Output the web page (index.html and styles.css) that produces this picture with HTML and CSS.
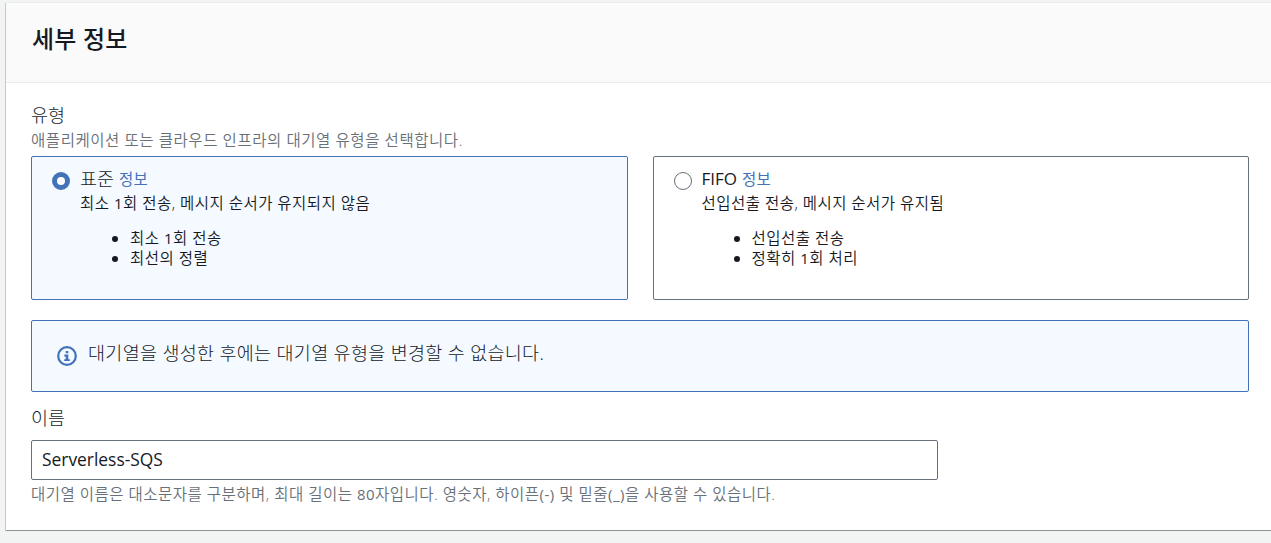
FILE: index.html
```html
<!DOCTYPE html>
<html lang="ko">
<head>
    <meta charset="UTF-8">
    <meta name="viewport" content="width=device-width, initial-scale=1.0">
    <title>세부 정보</title>
    <link rel="stylesheet" href="styles.css">
</head>
<body>
    <div class="panel">
        <div class="panel-header">
            <h2>세부 정보</h2>
        </div>
        <div class="panel-body">
            <div class="label">유형</div>
            <div class="hint type-hint">애플리케이션 또는 클라우드 인프라의 대기열 유형을 선택합니다.</div>

            <div class="tiles">
                <div class="tile selected">
                    <span class="radio"></span>
                    <div class="tile-content">
                        <div class="tile-title"><span class="name">표준</span> <a class="info">정보</a></div>
                        <div class="tile-desc">최소 <span class="num">1</span>회 전송, 메시지 순서가 유지되지 않음</div>
                        <ul>
                            <li>최소 <span class="num">1</span>회 전송</li>
                            <li>최선의 정렬</li>
                        </ul>
                    </div>
                </div>
                <div class="tile">
                    <span class="radio"></span>
                    <div class="tile-content">
                        <div class="tile-title"><span class="name latin">FIFO</span> <a class="info">정보</a></div>
                        <div class="tile-desc">선입선출 전송, 메시지 순서가 유지됨</div>
                        <ul>
                            <li>선입선출 전송</li>
                            <li>정확히 <span class="num">1</span>회 처리</li>
                        </ul>
                    </div>
                </div>
            </div>

            <div class="alert">
                <svg class="alert-icon" width="20" height="20" viewBox="0 0 20 20">
                    <circle cx="10" cy="10" r="8.8" fill="none" stroke="#4272b8" stroke-width="2.2"/>
                    <path d="M8.7 5h2.6v2.2H8.7zM7.3 8.6h4v4.6h1.5V15H7.2v-1.8h1.5v-2.8H7.3z" fill="#4272b8"/>
                </svg>
                <span class="alert-text">대기열을 생성한 후에는 대기열 유형을 변경할 수 없습니다.</span>
            </div>

            <div class="label">이름</div>
            <input class="input" type="text" value="Serverless-SQS">
            <div class="hint name-hint">대기열 이름은 대소문자를 구분하며, 최대 길이는 <span class="num">80</span>자입니다. 영숫자, 하이픈<span class="num">(-)</span> 및 밑줄<span class="num">(_)</span>을 사용할 수 있습니다.</div>
        </div>
    </div>
</body>
</html>
```
FILE: styles.css
```css
* {
    margin: 0;
    padding: 0;
    box-sizing: border-box;
}

body {
    background: #f2f3f3;
    padding: 3px 0 0 6px;
    font-family: "Open Sans", "Noto Sans CJK KR", sans-serif;
    font-weight: 350;
    font-size: 15.5px;
    color: #16191f;
    overflow: hidden;
    white-space: nowrap;
}

.panel {
    height: 528px;
    background: #fff;
    border-bottom: 1px solid #879596;
    box-shadow: 0 1px 0 #d5dbdb, -1px 0 0 #c4c9ca, 0 -1px 0 #eaeded;
}

.panel-header {
    height: 80px;
    padding: 18px 25px 0 26px;
    background: #fafafa;
    border-bottom: 1px solid #eaeded;
}

h2 {
    font-size: 24px;
    line-height: 36px;
    font-weight: 500;
    letter-spacing: 0.2px;
}

.panel-body {
    padding: 20px 22px 0 25px;
}

.label {
    font-size: 18.5px;
    font-weight: 300;
    line-height: 24px;
}

.hint {
    color: #687078;
    line-height: 24px;
}

.num {
    font-size: 15px;
    font-weight: 400;
}

.type-hint {
    padding-top: 1px;
    margin-bottom: 4px;
    letter-spacing: 0.56px;
}

.name-hint {
    letter-spacing: 0.49px;
}

.tiles {
    display: flex;
    gap: 25px;
    margin-bottom: 20px;
}

.tile {
    flex: 1;
    display: flex;
    height: 144px;
    padding: 10px 20px;
    border: 1px solid #687078;
    border-radius: 2px;
}

.tile.selected {
    border-color: #4272b8;
    background: #f4faff;
}

.radio {
    width: 18px;
    height: 18px;
    margin: 5px 10px 0 0;
    border: 1px solid #687078;
    border-radius: 50%;
    background: #fff;
}

.selected .radio {
    border: 5.5px solid #4272b8;
}

.tile-title {
    font-size: 18.5px;
    font-weight: 300;
    line-height: 24px;
    height: 24px;
    display: flex;
    gap: 5px;
}

.latin {
    font-size: 17px;
    font-weight: 400;
}

.info {
    font-size: 15.5px;
    font-weight: 400;
    color: #4272b8;
    letter-spacing: 0.3px;
}

.tile-desc {
    line-height: 20px;
    margin-top: 2px;
    letter-spacing: 0.47px;
}

ul {
    margin-top: 15px;
    padding-left: 50px;
    letter-spacing: 0.47px;
}

li {
    line-height: 20px;
}

.alert {
    display: flex;
    height: 72px;
    margin-bottom: 14px;
    padding: 25px;
    border: 1px solid #4272b8;
    border-radius: 2px;
    background: #f4faff;
}

.alert-icon {
    margin-right: 11px;
}

.alert-text {
    font-size: 18.5px;
    font-weight: 300;
    line-height: 20px;
    margin-top: -3px;
    letter-spacing: 0.3px;
}

.input {
    display: block;
    width: 907px;
    height: 40px;
    margin: 10px 0 2px;
    padding: 0 10px 2px;
    border: 1px solid #687078;
    border-radius: 2px;
    font-family: "Open Sans", sans-serif;
    font-size: 17.4px;
    color: #16191f;
}
```
